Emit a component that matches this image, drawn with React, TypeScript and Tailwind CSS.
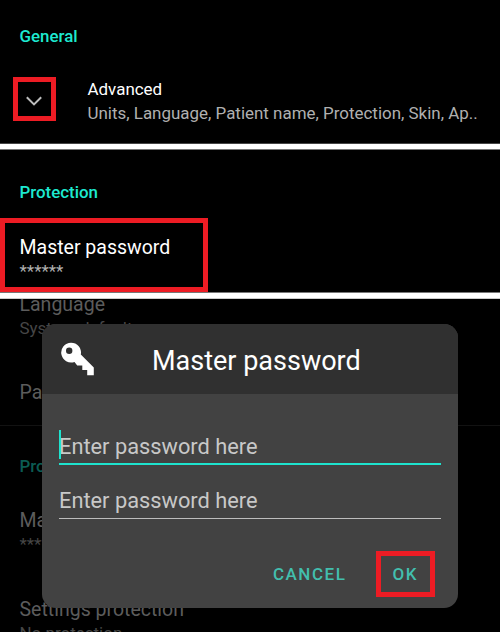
import type { ReactNode } from 'react';

function Heading({ children, className = '' }: { children: ReactNode; className?: string }) {
  return <h2 className={`h-5 text-[16.9px] leading-5 font-medium whitespace-nowrap ${className}`}>{children}</h2>;
}

function Preference({ title, summary }: { title: string; summary?: string }) {
  return (
    <div className="h-12 whitespace-nowrap">
      <div className="text-[19.5px] leading-6 text-[#5c5c5c]">{title}</div>
      {summary && <div className="text-[16.95px] leading-[23px] text-[#464646]">{summary}</div>}
    </div>
  );
}

function KeyIcon() {
  return (
    <svg className="ml-[18px] h-[36px] w-[36px]" viewBox="60 341 36 36">
      <path
        fill="#fff"
        fillRule="evenodd"
        d="M71 342.7a9.9 9.9 0 0 1 9.8 11.9L93.8 367.6V375.2H87.2V370H82.3V365.4H77.2L74.5 361.9A9.9 9.9 0 1 1 71 342.7ZM69.2 347.6a3.2 3.2 0 1 0 0 6.4a3.2 3.2 0 1 0 0-6.4Z"
      />
    </svg>
  );
}

function PasswordField({ active = false }: { active?: boolean }) {
  return (
    <div
      className={`relative whitespace-nowrap text-[21.8px] text-[#c8c8c8] ${
        active
          ? 'h-[35px] border-b-2 border-[#1ee3ce] leading-[33px]'
          : 'mt-[20px] h-[34px] border-b border-[#bdbdbd] leading-[31px]'
      }`}
    >
      {active && <span className="absolute top-0 left-0 h-[29px] w-[2px] bg-[#1ee3ce]" />}
      <span>Enter password here</span>
    </div>
  );
}

export default function App() {
  return (
    <main className="h-[642px] w-[500px] overflow-hidden bg-white font-['Roboto',sans-serif]">
      <section className="h-36 border-b border-[#444] bg-black pt-[26px]">
        <Heading className="pl-[19.5px] text-[#1de9d0]">General</Heading>
        <div className="mt-[31px] flex pl-[13px]">
          <div className="flex h-11 w-[43px] items-center justify-center border-5 border-[#ed1c24]">
            <svg className="mt-[3px] mr-px h-[10px] w-4" viewBox="0 0 16 10" fill="none" stroke="#bdbdbd" strokeWidth="2">
              <path d="M.8 1.2 8 8.4l7.2-7.2" />
            </svg>
          </div>
          <div className="ml-[31.5px] whitespace-nowrap">
            <div className="text-[16.95px] leading-6 text-white">Advanced</div>
            <div className="text-[16.95px] leading-6 text-[#b0b0b0]">
              Units, Language, Patient name, Protection, Skin, Ap..
            </div>
          </div>
        </div>
      </section>

      <section className="mt-[5px] h-36 border-y border-[#777] bg-black pt-8">
        <Heading className="pl-[19.5px] text-[#1de9d0]">Protection</Heading>
        <div className="mt-4 h-[74px] w-52 border-5 border-[#ed1c24] pt-[13px] pl-[14.5px] whitespace-nowrap">
          <div className="text-[19.5px] leading-6 text-white">Master password</div>
          <div className="text-[17px] leading-[23px] text-[#b0b0b0]">******</div>
        </div>
      </section>

      <section className="relative mt-[5px] h-[334px] overflow-hidden border-t border-[#ccc] bg-black">
        <div className="-mt-[6px] pl-[19.5px]">
          <Preference title="Language" summary="System default" />
        </div>
        <div className="mt-[40px] h-[45px] border-b border-[#121212] pl-[19.5px]">
          <Preference title="Patient name" />
        </div>
        <Heading className="mt-[30px] pl-[19.5px] text-[#0b5c53]">Protection</Heading>
        <div className="mt-[33px] pl-[19.5px]">
          <Preference title="Master password" summary="******" />
        </div>
        <div className="mt-[41px] pl-[19.5px]">
          <Preference title="Settings protection" summary="No protection" />
        </div>

        <div className="absolute top-[25px] left-[42px] h-[284px] w-[416px] overflow-hidden rounded-[14px] bg-[#424242]">
          <header className="flex h-[70px] items-center bg-[#303030]">
            <KeyIcon />
            <h1 className="mt-[3px] ml-[56px] text-[27px] leading-8 whitespace-nowrap text-white">Master password</h1>
          </header>
          <div className="px-[17px] pt-9">
            <PasswordField active />
            <PasswordField />
          </div>
          <div className="mt-8 flex h-[46px] items-center text-[17px] font-medium tracking-[1.5px] text-[#42bfae]">
            <button className="mt-[2px] ml-[231px]">CANCEL</button>
            <button className="ml-[30px] h-[46px] w-[59px] border-5 border-[#ed1c24] pt-px pr-px">OK</button>
          </div>
        </div>
      </section>
    </main>
  );
}
